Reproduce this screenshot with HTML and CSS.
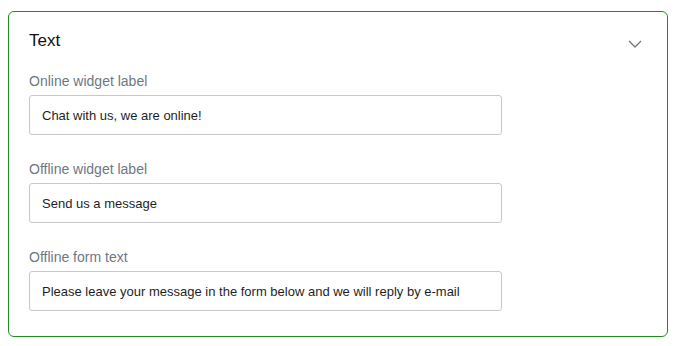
FILE: index.html
```html
<!DOCTYPE html>
<html lang="en">
<head>
    <meta charset="UTF-8">
    <meta name="viewport" content="width=device-width, initial-scale=1.0">
    <title>Widget text settings</title>
    <link rel="stylesheet" href="styles.css">
</head>
<body>
    <section class="panel">
        <div class="panel-header">
            <h2>Text</h2>
            <svg class="chevron" viewBox="0 0 14 8" fill="none" stroke="currentColor" stroke-width="1.3" aria-hidden="true">
                <polyline points="1 1 7 7 13 1"></polyline>
            </svg>
        </div>

        <div class="field">
            <label for="online-label">Online widget label</label>
            <input id="online-label" type="text" value="Chat with us, we are online!">
        </div>

        <div class="field">
            <label for="offline-label">Offline widget label</label>
            <input id="offline-label" type="text" value="Send us a message">
        </div>

        <div class="field">
            <label for="offline-text">Offline form text</label>
            <input id="offline-text" type="text" value="Please leave your message in the form below and we will reply by e-mail">
        </div>
    </section>
</body>
</html>
```

FILE: styles.css
```css
:root {
    --green: #228b22;
    --text-color: #1f1f1f;
    --label-color: #6f7784;
    --input-border: #c8c8c8;
    --icon-color: #777777;
}

*, *::before, *::after {
    box-sizing: border-box;
}

body {
    margin: 0;
    padding: 11px 8px;
    background: #ffffff;
    font-family: "Liberation Sans", Arial, sans-serif;
    color: var(--text-color);
}

.panel {
    border: 1px solid var(--green);
    border-radius: 6px;
    padding: 17px 20px 1px;
}

.panel-header {
    display: flex;
    justify-content: space-between;
    align-items: flex-start;
    margin-bottom: 18px;
}

.panel-header h2 {
    margin: 0;
    font-size: 17px;
    font-weight: 400;
    line-height: 24px;
    color: #111111;
}

.chevron {
    width: 14px;
    height: 8px;
    margin: 11px 5px 0 0;
    color: var(--icon-color);
}

/* Campos */
.field {
    margin-bottom: 24px;
}

.field label {
    display: block;
    font-size: 14px;
    line-height: 20px;
    color: var(--label-color);
    margin-bottom: 4px;
}

.field input {
    display: block;
    width: 473px;
    height: 40px;
    padding: 0 12px;
    border: 1px solid var(--input-border);
    border-radius: 3px;
    font-family: inherit;
    font-size: 13px;
    color: var(--text-color);
    background: #ffffff;
    outline: none;
}
```
